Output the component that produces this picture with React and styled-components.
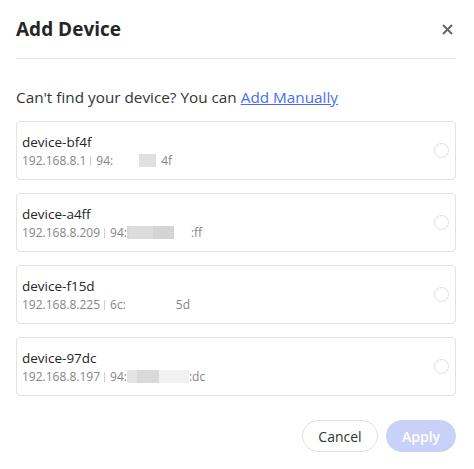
import React from 'react';
import styled, { createGlobalStyle } from 'styled-components';

const Global = createGlobalStyle`
  html, body {
    margin: 0;
    padding: 0;
    background: #fff;
    font-family: "Open Sans", "Noto Sans", Arial, sans-serif;
    color: #333;
  }
`;

const Dialog = styled.div`
  width: 474px;
  height: 469px;
  box-sizing: border-box;
  padding: 0 18px 0 16px;
  display: flex;
  flex-direction: column;
`;

const Header = styled.div`
  height: 58px;
  display: flex;
  align-items: center;
  justify-content: space-between;
  border-bottom: 1px solid #e6e6e6;
`;

const Title = styled.div`
  font-size: 19px;
  font-weight: 700;
  color: #262626;
`;

const Close = styled.button`
  border: none;
  background: none;
  padding: 0;
  width: 14px;
  height: 14px;
  margin-right: 2px;
  display: flex;
  align-items: center;
  justify-content: center;
  cursor: pointer;
`;

const Prompt = styled.div`
  margin-top: 27px;
  font-size: 15.3px;
  line-height: 22px;
  color: #333;
`;

const Link = styled.a`
  color: #4a6cf4;
  text-decoration: underline;
  cursor: pointer;
`;

const List = styled.div`
  margin-top: 13px;
  display: flex;
  flex-direction: column;
  gap: 13px;
`;

const Card = styled.div`
  height: 59px;
  box-sizing: border-box;
  border: 1px solid #e3e3e3;
  border-radius: 4px;
  padding: 0 5px;
  display: flex;
  align-items: center;
  justify-content: space-between;
`;

const Info = styled.div`
  display: flex;
  flex-direction: column;
`;

const Name = styled.div`
  font-size: 13.5px;
  line-height: 20px;
  color: #262626;
`;

const Sub = styled.div`
  font-size: 12px;
  line-height: 18px;
  color: #858585;
  display: flex;
  align-items: center;
`;

const Sep = styled.span`
  width: 1px;
  height: 10px;
  background: #d0d0d0;
  margin: 0 5px 0 4px;
`;

const Mask = styled.span`
  display: inline-block;
  height: 13px;
  width: ${p => p.w}px;
  background: ${p => p.bg || 'transparent'};
`;

const Radio = styled.span`
  width: 15px;
  height: 15px;
  border-radius: 50%;
  border: 1px solid #dedede;
  box-sizing: border-box;
  margin-right: 1px;
`;

const Footer = styled.div`
  margin-top: 24px;
  display: flex;
  justify-content: flex-end;
  gap: 8px;
`;

const Button = styled.button`
  height: 32px;
  border-radius: 16px;
  font-family: inherit;
  font-size: 14px;
  padding: 0;
  width: ${p => p.w}px;
  border: 1px solid ${p => (p.primary ? '#c8d2f9' : '#e2e2e2')};
  background: ${p => (p.primary ? '#c8d2f9' : '#fff')};
  color: ${p => (p.primary ? '#fff' : '#333')};
  font-weight: ${p => (p.primary ? 600 : 400)};
`;

const devices = [
  { name: 'device-bf4f', ip: '192.168.8.1', pre: '94:', masks: [[26], [17, '#e0e0e0'], [5]], post: '4f' },
  { name: 'device-a4ff', ip: '192.168.8.209', pre: '94:', masks: [[2, '#d8d8d8'], [24, '#dcdcdc'], [21, '#d4d4d4'], [17]], post: ':ff' },
  { name: 'device-f15d', ip: '192.168.8.225', pre: '6c:', masks: [[50]], post: '5d' },
  { name: 'device-97dc', ip: '192.168.8.197', pre: '94:', masks: [[10, '#e4e4e4'], [22, '#d9d9d9'], [30, '#f1f1f1']], post: ':dc' },
];

export default function App() {
  return (
    <>
      <Global />
      <Dialog>
        <Header>
          <Title>Add Device</Title>
          <Close aria-label="close">
            <svg width="11" height="11" viewBox="0 0 11 11">
              <path d="M1 1L10 10M10 1L1 10" stroke="#666" strokeWidth="2" />
            </svg>
          </Close>
        </Header>
        <Prompt>
          Can't find your device? You can <Link>Add Manually</Link>
        </Prompt>
        <List>
          {devices.map(d => (
            <Card key={d.name}>
              <Info>
                <Name>{d.name}</Name>
                <Sub>
                  {d.ip}
                  <Sep />
                  {d.pre}
                  {d.masks.map((m, i) => (
                    <Mask key={i} w={m[0]} bg={m[1]} />
                  ))}
                  {d.post}
                </Sub>
              </Info>
              <Radio />
            </Card>
          ))}
        </List>
        <Footer>
          <Button w={76}>Cancel</Button>
          <Button w={70} primary>Apply</Button>
        </Footer>
      </Dialog>
    </>
  );
}
